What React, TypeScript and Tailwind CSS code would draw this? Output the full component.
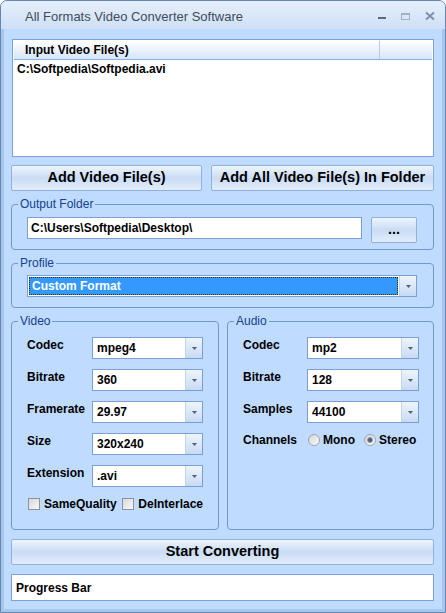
import React from "react";

const BG = "bg-[#bfdbff]";

function Arrow() {
  return (
    <div className="w-[17px] h-full border-l border-[#c2d4ec] bg-linear-to-b from-[#eef4fc] via-[#dce8f8] to-[#c6d9f2] flex items-center justify-center">
      <svg width="5" height="3" viewBox="0 0 5 3">
        <path d="M0 0H5L2.5 3Z" fill="#4a5f80" />
      </svg>
    </div>
  );
}

function Combo({ value }: { value: string }) {
  return (
    <div className="flex-1 h-[22px] flex border border-[#7c9fd4] bg-white">
      <div className="flex-1 flex items-center pl-[4px] text-[12px] font-bold text-black">{value}</div>
      <Arrow />
    </div>
  );
}

function Group({ title, className, children }: { title: string; className?: string; children: React.ReactNode }) {
  return (
    <div className={`relative border border-[#6e9ad3] rounded-[4px] ${className ?? ""}`}>
      <span className={`absolute -top-[8px] left-[6px] px-[2px] ${BG} text-[12px] leading-[14px] text-[#15428b]`}>{title}</span>
      {children}
    </div>
  );
}

function Btn({ children, className }: { children: React.ReactNode; className?: string }) {
  return (
    <div
      className={`flex items-center justify-center h-[26px] border border-[#8fb2e0] rounded-[2px] bg-linear-to-b from-[#eef5fd] via-[#cadcf4] to-[#e2edfb] text-[14.5px] font-bold text-black ${className ?? ""}`}
    >
      {children}
    </div>
  );
}

function Check({ label, className }: { label: string; className?: string }) {
  return (
    <div className={`flex items-center ${className ?? ""}`}>
      <div className="w-[12px] h-[12px] border border-[#8e9198] bg-linear-to-br from-[#d8d9db] to-[#f8f8f8]" />
      <span className="ml-[4px] text-[12px] leading-[14px] font-bold text-black">{label}</span>
    </div>
  );
}

function Radio({ label, checked }: { label: string; checked?: boolean }) {
  return (
    <div className="flex items-center">
      <div className="w-[12px] h-[12px] rounded-full border border-[#a2a5aa] bg-linear-to-br from-[#d4d5d8] to-[#fbfbfb] flex items-center justify-center">
        {checked && <div className="w-[6px] h-[6px] rounded-full bg-[#4b5f7e] border border-[#8a99ad]" />}
      </div>
      <span className="ml-[3px] text-[12px] leading-[14px] font-bold text-black">{label}</span>
    </div>
  );
}

function Row({ label, value, lw }: { label: string; value: string; lw: string }) {
  return (
    <div className="flex h-[22px]">
      <div className={`${lw} pt-[1px] text-[12px] leading-[14px] font-bold text-black`}>{label}</div>
      <Combo value={value} />
    </div>
  );
}

export default function App() {
  return (
    <div
      className={`w-[446px] h-[613px] flex flex-col ${BG} font-['Liberation_Sans',Arial,sans-serif] border border-[#6585b5] rounded-t-[7px] overflow-hidden shadow-[inset_3px_0_0_#a8c5ec,inset_-3px_0_0_#a8c5ec,inset_0_-3px_0_#a8c5ec]`}
    >
      {/* Title bar */}
      <div className="h-[28px] shrink-0 flex items-center pl-[24px] bg-linear-to-b from-[#e6effb] to-[#cee0f6]">
        <span className="pt-[3px] text-[13px] text-[#404c5e]">All Formats Video Converter Software</span>
        <svg className="ml-auto" width="70" height="28" viewBox="0 0 70 28">
          <rect x="3" y="16" width="8" height="2" fill="#56678a" />
          <rect x="26.5" y="12.5" width="8" height="6" fill="none" stroke="#9fb0c8" strokeWidth="1" />
          <rect x="26" y="12" width="9" height="2" fill="#9fb0c8" />
          <path d="M51 11.5L59 18.5M59 11.5L51 18.5" stroke="#7d90ad" strokeWidth="2" />
        </svg>
      </div>

      {/* Body */}
      <div className="flex-1 flex flex-col pl-[10px] pr-[11px] pt-[10px]">
        {/* List */}
        <div className="ml-[1px] h-[118px] border border-[#7aa3de] bg-white p-[1px] flex flex-col">
          <div className="h-[19px] flex border-b border-[#8ab1e3] bg-linear-to-b from-[#ffffff] to-[#d6e5f8]">
            <div className="w-[366px] flex items-center pl-[11px] text-[12px] font-bold text-black border-r border-[#b3cdee]">
              Input Video File(s)
            </div>
          </div>
          <div className="pl-[3px] pt-[2px] text-[12px] leading-[14px] font-bold text-black">C:\Softpedia\Softpedia.avi</div>
        </div>

        {/* Buttons */}
        <div className="flex gap-[9px] mt-[8px]">
          <Btn className="w-[191px]">Add Video File(s)</Btn>
          <Btn className="flex-1">Add All Video File(s) In Folder</Btn>
        </div>

        {/* Output Folder */}
        <Group title="Output Folder" className="mt-[13px] h-[46px] pt-[12px] pl-[15px] pr-[16px]">
          <div className="flex gap-[9px]">
            <div className="flex-1 h-[22px] bg-white border border-[#7c9fd4] flex items-center pl-[3px] text-[12px] font-bold text-black">
              C:\Users\Softpedia\Desktop\
            </div>
            <Btn className="w-[46px] h-[22px] text-[12px]">...</Btn>
          </div>
        </Group>

        {/* Profile */}
        <Group title="Profile" className="mt-[13px] h-[45px] pt-[11px] pl-[15px] pr-[16px]">
          <div className="h-[22px] flex border border-[#7c9fd4] bg-white">
            <div className="flex-1 p-[1px]">
              <div className="h-full bg-[#3399ff] border border-dotted border-[#3a2a10] flex items-center pl-[2px] text-[12px] font-bold text-white">
                Custom Format
              </div>
            </div>
            <Arrow />
          </div>
        </Group>

        {/* Video / Audio */}
        <div className="flex gap-[8px] mt-[13px]">
          <Group title="Video" className="w-[208px] h-[209px]">
            <div className="flex flex-col gap-[10px] pt-[15px] pl-[15px] pr-[15px]">
              <Row label="Codec" value="mpeg4" lw="w-[65px]" />
              <Row label="Bitrate" value="360" lw="w-[65px]" />
              <Row label="Framerate" value="29.97" lw="w-[65px]" />
              <Row label="Size" value="320x240" lw="w-[65px]" />
              <Row label="Extension" value=".avi" lw="w-[65px]" />
              <div className="flex items-center h-[12px] mt-[1px] ml-[1px]">
                <Check label="SameQuality" className="w-[96px]" />
                <Check label="DeInterlace" />
              </div>
            </div>
          </Group>
          <Group title="Audio" className="flex-1 h-[209px]">
            <div className="flex flex-col gap-[10px] pt-[15px] pl-[15px] pr-[14px]">
              <Row label="Codec" value="mp2" lw="w-[64px]" />
              <Row label="Bitrate" value="128" lw="w-[64px]" />
              <Row label="Samples" value="44100" lw="w-[64px]" />
              <div className="flex items-center h-[14px]">
                <div className="w-[65px] text-[12px] leading-[14px] font-bold text-black">Channels</div>
                <div className="w-[56px]">
                  <Radio label="Mono" />
                </div>
                <Radio label="Stereo" checked />
              </div>
            </div>
          </Group>
        </div>

        {/* Start */}
        <Btn className="mt-[9px]">Start Converting</Btn>

        {/* Progress */}
        <div className="mt-[9px] h-[27px] bg-white border border-[#7ba2da] flex items-center pl-[4px] text-[12px] font-bold text-black">
          Progress Bar
        </div>
      </div>
    </div>
  );
}
